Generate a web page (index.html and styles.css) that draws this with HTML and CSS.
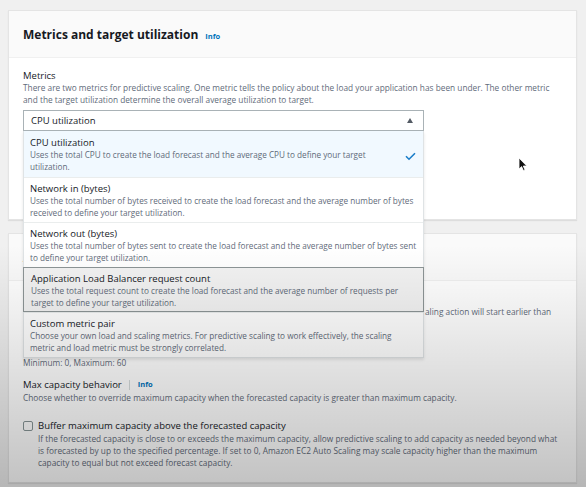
FILE: index.html
```html
<!DOCTYPE html>
<html>
<head>
<meta charset="utf-8">
<link rel="stylesheet" href="styles.css">
</head>
<body>
<div class="page">
  <section class="card card-metrics">
    <div class="card-header">
      <h2 class="title">Metrics and target utilization</h2>
      <a class="info">Info</a>
    </div>
    <div class="card-body">
      <div class="label">Metrics</div>
      <p class="desc">There are two metrics for predictive scaling. One metric tells the policy about the load your application has been under. The other metric and the target utilization determine the overall average utilization to target.</p>
      <div class="select-wrap">
        <div class="select">
          <span>CPU utilization</span>
          <span class="caret"></span>
        </div>
        <ul class="dropdown">
          <li class="option selected">
            <div class="opt-text">
              <div class="opt-title">CPU utilization</div>
              <div class="opt-desc">Uses the total CPU to create the load forecast and the average CPU to define your target utilization.</div>
            </div>
            <svg class="check" width="11" height="9" viewBox="0 0 11 9"><path d="M1 4.2 L4 7.2 L10 1.2" fill="none" stroke="#1a7dc9" stroke-width="1.6"/></svg>
          </li>
          <li class="option">
            <div class="opt-text">
              <div class="opt-title">Network in (bytes)</div>
              <div class="opt-desc">Uses the total number of bytes received to create the load forecast and the average number of bytes received to define your target utilization.</div>
            </div>
          </li>
          <li class="option">
            <div class="opt-text">
              <div class="opt-title">Network out (bytes)</div>
              <div class="opt-desc">Uses the total number of bytes sent to create the load forecast and the average number of bytes sent to define your target utilization.</div>
            </div>
          </li>
          <li class="option hovered">
            <div class="opt-text">
              <div class="opt-title">Application Load Balancer request count</div>
              <div class="opt-desc">Uses the total request count to create the load forecast and the average number of requests per target to define your target utilization.</div>
            </div>
          </li>
          <li class="option">
            <div class="opt-text">
              <div class="opt-title">Custom metric pair</div>
              <div class="opt-desc">Choose your own load and scaling metrics. For predictive scaling to work effectively, the scaling metric and load metric must be strongly correlated.</div>
            </div>
          </li>
        </ul>
      </div>
    </div>
  </section>

  <section class="card card-additional">
    <div class="card-header header-small">
      <h2 class="title">Additional scaling settings</h2>
    </div>
    <div class="card-body body2">
      <div class="label">Pre-launch instances</div>
      <p class="desc prelaunch"><span class="pre-hidden">Choose how far in advance you want your instances launched before the forecast calls for it. The sc</span><span>aling action will start earlier than</span></p>
      <div class="input-box"></div>
      <p class="desc constraint">Minimum: 0, Maximum: 60</p>
      <div class="label row-label">Max capacity behavior <span class="sep"></span><a class="info">Info</a></div>
      <p class="desc">Choose whether to override maximum capacity when the forecasted capacity is greater than maximum capacity.</p>
      <div class="checkbox-row">
        <span class="checkbox"></span>
        <div>
          <div class="cb-title">Buffer maximum capacity above the forecasted capacity</div>
          <p class="desc cb-desc">If the forecasted capacity is close to or exceeds the maximum capacity, allow predictive scaling to add capacity as needed beyond what is forecasted by up to the specified percentage. If set to 0, Amazon EC2 Auto Scaling may scale capacity higher than the maximum capacity to equal but not exceed forecast capacity.</p>
        </div>
      </div>
    </div>
  </section>
</div>
<div class="shade"></div>
<svg class="cursor" width="10" height="15" viewBox="0 0 10 15"><path d="M1 1 L1 12 L3.6 9.6 L5.4 13.6 L7 12.9 L5.3 9 L8.8 9 Z" fill="#111" stroke="#fff" stroke-width="0.8"/></svg>
</body>
</html>
```

FILE: styles.css
```css
* { box-sizing: border-box; }
html, body { margin: 0; padding: 0; }
body {
  width: 586px;
  height: 487px;
  overflow: hidden;
  background: #f0f0f0;
  font-family: "Open Sans", "Noto Sans", sans-serif;
  color: #16191f;
  position: relative;
}
.page {
  padding: 10px 9px 0 8px;
}
.card {
  background: #fff;
  border: 1px solid #e4e4e4;
  box-shadow: 0 1px 1px rgba(0,0,0,0.08);
}
.card-metrics { height: 210px; }
.card-header {
  background: #fafafa;
  height: 47px;
  display: flex;
  align-items: center;
  gap: 7px;
  padding: 0 14px;
  border-bottom: 1px solid #f0f0f0;
}
.title {
  margin: 0;
  font-size: 12px;
  font-weight: 700;
  color: #16191f;
}
.info {
  color: #0073bb;
  font-size: 7.5px;
  font-weight: 700;
  margin-top: 3px;
}
.card-body {
  padding: 11px 14px 0 14px;
}
.label {
  font-size: 9.5px;
  line-height: 13px;
  color: #16191f;
}
.desc {
  margin: 0;
  font-size: 8.3px;
  line-height: 12px;
  color: #5f6b7a;
}
.select-wrap {
  position: relative;
  margin-top: 4px;
  width: 401px;
}
.select {
  height: 21px;
  border: 1px solid #a9b2b6;
  display: flex;
  align-items: center;
  justify-content: space-between;
  padding: 0 9px 0 7px;
  font-size: 9.5px;
  background: #fff;
}
.caret {
  width: 0;
  height: 0;
  border-left: 3.5px solid transparent;
  border-right: 3.5px solid transparent;
  border-bottom: 5px solid #545b64;
  margin-right: 1px;
}
.dropdown {
  position: absolute;
  left: 0;
  top: 21px;
  width: 401px;
  margin: 0;
  padding: 0;
  list-style: none;
  background: #fff;
  border: 1px solid #dfe3e5;
  border-top: none;
  z-index: 5;
  box-shadow: 0 2px 3px rgba(0,0,0,0.1);
}
.option {
  display: flex;
  align-items: flex-start;
  justify-content: space-between;
  gap: 12px;
  padding: 4px 5px 0 6px;
  border-top: 1px solid #eaeded;
  height: 45px;
}
.option:first-child { border-top: none; height: 46px; padding-top: 5px; padding-right: 7px; }
.option.selected { background: #f1f9ff; }
.option.hovered {
  background: #f3f3f3;
  border: 1px solid #8d9596;
  margin: 0 -1px;
  padding-left: 7px;
}
.opt-title {
  font-size: 9.5px;
  line-height: 13px;
  color: #16191f;
}
.opt-desc {
  font-size: 8.2px;
  line-height: 12px;
  color: #5f6b7a;
}
.check { flex: none; margin-right: 0; align-self: center; }

.card-additional {
  margin-top: 13px;
  height: 250px;
}
.header-small { height: 47px; }
.header-small .title { font-size: 11px; }
.body2 { padding-top: 12px; }
.prelaunch { white-space: nowrap; overflow: hidden; }
.pre-hidden {
  display: inline-block;
  width: 402px;
  overflow: hidden;
  vertical-align: top;
}
.input-box {
  height: 21px;
  width: 200px;
  border: 1px solid #a9b2b6;
  margin-top: 6px;
}
.constraint { margin-top: 12px; }
.row-label {
  margin-top: 9px;
  display: flex;
  align-items: center;
}
.sep {
  display: inline-block;
  width: 1px;
  height: 10px;
  background: #d5dbdb;
  margin: 0 8px 0 7px;
}
.row-label .info { margin-top: 0; font-size: 7.5px; }
.row-label + .desc { margin-top: 1px; }
.checkbox-row {
  display: flex;
  gap: 5px;
  margin-top: 16px;
}
.checkbox {
  flex: none;
  width: 10px;
  height: 10px;
  border: 1px solid #879596;
  border-radius: 2px;
  background: #fff;
  margin-top: 1px;
}
.cb-title {
  font-size: 9.5px;
  line-height: 12px;
  color: #16191f;
}
.cb-desc { margin-top: 1px; }

.shade {
  position: absolute;
  left: 0;
  top: 0;
  width: 586px;
  height: 487px;
  pointer-events: none;
  z-index: 10;
  background: linear-gradient(to bottom, rgba(0,0,0,0) 0px, rgba(0,0,0,0) 245px, rgba(0,0,0,0.07) 320px, rgba(0,0,0,0.24) 487px);
}
.cursor {
  position: absolute;
  left: 518px;
  top: 157px;
  z-index: 11;
}
```
